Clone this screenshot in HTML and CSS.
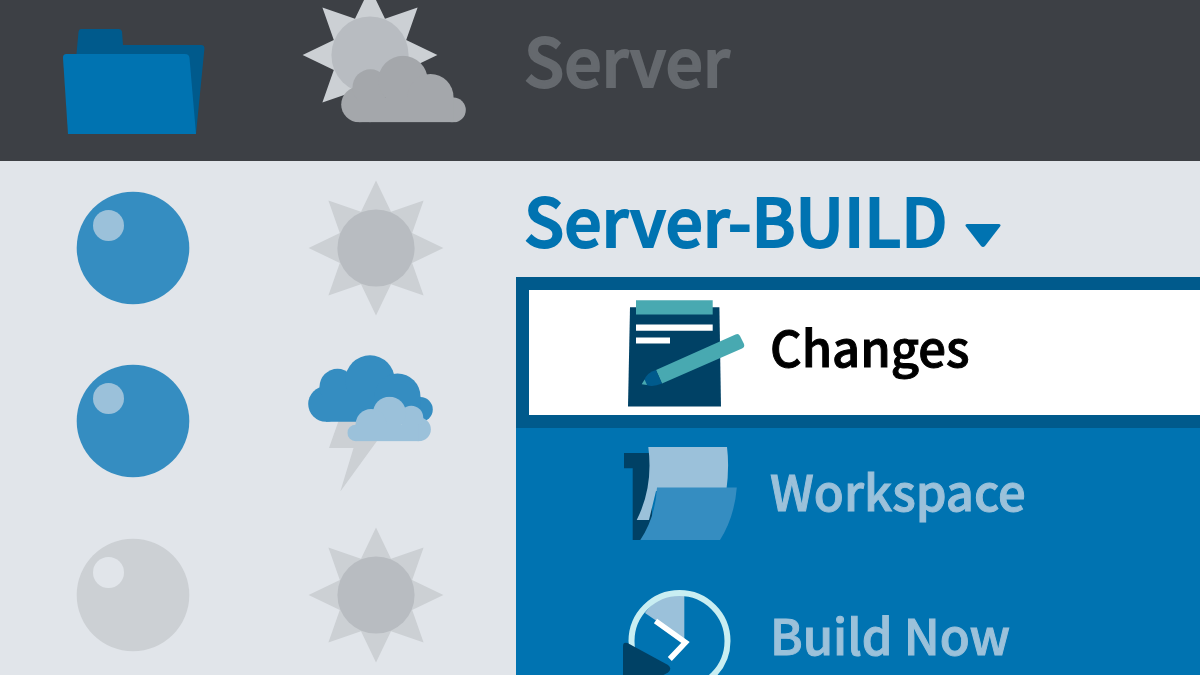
FILE: index.html
```
<!DOCTYPE html>
<html lang="en">
<head>
  <meta charset="UTF-8">
  <meta name="viewport" content="width=device-width, initial-scale=1.0">
  <title>Server-BUILD</title>
  <link rel="stylesheet" href="styles.css">
</head>
<body>
  <!-- shared shapes -->
  <svg class="shapes" width="0" height="0" aria-hidden="true">
    <symbol id="ball" viewBox="0 0 114 114">
      <circle cx="57" cy="57" r="56.3" fill="currentColor"/>
      <circle class="shine" cx="32.5" cy="34.5" r="15.5"/>
    </symbol>
    <symbol id="sun" viewBox="0 0 136 136">
      <path class="rays" d="M68 .6 83 31.8 115.6 20.4 104.2 53 135.4 68 104.2 83 115.6 115.6 83 104.2 68 135.4 53 104.2 20.4 115.6 31.8 83 .6 68 31.8 53 20.4 20.4 53 31.8Z"/>
      <circle class="core" cx="68" cy="68" r="38.6"/>
    </symbol>
    <symbol id="cloud" viewBox="0 0 125 67">
      <g fill="currentColor">
        <circle cx="18" cy="49" r="17.8"/>
        <circle cx="29.5" cy="31.8" r="18"/>
        <circle cx="62" cy="25" r="24.7"/>
        <circle cx="89.5" cy="41.5" r="23"/>
        <circle cx="112.4" cy="54.4" r="12.4"/>
        <path d="M18 42H112.4V66.8H18Z"/>
      </g>
    </symbol>
  </svg>

  <table class="jobs">
    <colgroup>
      <col class="col-status">
      <col class="col-weather">
      <col>
    </colgroup>
    <tbody>
      <tr class="folder-row">
        <td class="status">
          <svg width="144" height="106" viewBox="-1 0 144 106">
            <path fill="#005a8c" d="M19 0H57Q59.500 0 60 2.500L61 16H139Q142.800 16 142.400 20L134 105H50L14 30 16.500 3Q17 0 19 0Z"/>
            <path fill="#0073b1" d="M4.500 25H123Q127 25 127.500 29L134 105H6L1 29Q.8 25 4.500 25Z"/>
          </svg>
        </td>
        <td class="weather">
          <svg width="180" height="135" viewBox="0 0 180 135">
            <use href="#sun" x="16" y="-1" width="136" height="136"/>
            <use class="cloud-gray" href="#cloud" x="55" y="67.500" width="125" height="67"/>
          </svg>
        </td>
        <td class="name"><a href="#">Server</a></td>
      </tr>
      <tr>
        <td class="status"><svg class="ball blue" width="114" height="114"><use href="#ball"/></svg></td>
        <td class="weather"><svg width="136" height="136"><use href="#sun"/></svg></td>
        <td class="name">
          <div class="title">
            <a href="#">Server-BUILD</a>
            <button class="caret" type="button" aria-label="Open menu" aria-expanded="true">
              <svg width="36" height="24" viewBox="0 0 36 24">
                <path d="M2 0H34Q36.500 .4 35 2.500L20 22Q18 24 16 22L1 2.500Q-.5 .4 2 0Z" fill="currentColor"/>
              </svg>
            </button>
          </div>
          <nav class="menu">
            <a class="item selected" href="#">
              <svg width="130" height="120" viewBox="0 0 130 120">
                <path fill="#004165" d="M10 14.300H99.400L101 113.500H8Z"/>
                <path fill="#48a9b1" d="M16 7.300H92.700V21.500H16Z"/>
                <path fill="#fff" d="M16 31.500H92.700V37.800H16ZM16 44.500H50V50.500H16Z"/>
                <path fill="#48a9b1" d="M36 77 115.500 41.500Q118.500 40 120 43L124 51Q125 54 122 55.500L42 90.500Z"/>
                <path fill="#005a8c" d="M36 77 42 90.500Q33 94.500 26.500 92L24.300 87Q27 79.500 36 77Z"/>
                <path fill="#48a9b1" d="M21.700 91.300 24.600 86.500 27 92Z"/>
              </svg>
              <span>Changes</span>
            </a>
            <a class="item" href="#">
              <svg width="130" height="120" viewBox="0 0 130 120">
                <path fill="#004165" d="M4 16H32V80L24 103H12.700V31.300H4Z"/>
                <path fill="#9bc1da" d="M28.300 10H107Q109.500 30 106.300 54H36L29 83H16.700Q33.500 50 28.300 10Z"/>
                <path fill="#358dc1" d="M37 50.400H116.800Q114.500 80 100 103H20.300Q35.500 80 37 50.400Z"/>
              </svg>
              <span>Workspace</span>
            </a>
            <a class="item" href="#">
              <svg width="130" height="120" viewBox="0 0 130 120">
                <path fill="#9bc1da" d="M64.300 59V13Q40 10 25 32Z"/>
                <circle cx="59.500" cy="60" r="48" fill="none" stroke="#c9eef2" stroke-width="6"/>
                <path d="M35.500 40 65.500 61.500 49.800 78" fill="none" stroke="#fff" stroke-width="5.500"/>
                <path fill="#004165" d="M3 65Q3 60.500 7.500 62L48 84Q52.500 87.500 48 91.500L7.500 114Q3 116 3 111Z"/>
              </svg>
              <span>Build Now</span>
            </a>
          </nav>
        </td>
      </tr>
      <tr>
        <td class="status"><svg class="ball blue" width="114" height="114"><use href="#ball"/></svg></td>
        <td class="weather">
          <svg width="136" height="140" viewBox="0 0 136 140">
            <path class="rays" d="M34 60 21 97H45.500L32.300 140.500 69 90V60Z"/>
            <use class="cloud-blue" href="#cloud" x="0" y="4" width="125" height="67"/>
            <g transform="translate(123 45.500) scale(-.67 .67)">
              <use class="cloud-light" href="#cloud" width="125" height="67"/>
            </g>
          </svg>
        </td>
        <td></td>
      </tr>
      <tr>
        <td class="status"><svg class="ball gray" width="114" height="114"><use href="#ball"/></svg></td>
        <td class="weather"><svg width="136" height="136"><use href="#sun"/></svg></td>
        <td></td>
      </tr>
    </tbody>
  </table>
</body>
</html>
```
FILE: styles.css
```
body {
  margin: 0;
  height: 100vh;
  overflow: hidden;
  background-color: #e1e5ea;
  font-family: "Noto Sans CJK SC", "Noto Sans", sans-serif;
  font-weight: 500;
}

svg {
  display: block;
  flex-shrink: 0;
}

.shapes {
  position: absolute;
}

a {
  color: inherit;
  text-decoration: none;
  -webkit-text-stroke: 2px; /* semibold look */
}

.jobs {
  width: 100%;
  margin-top: -12px; /* list is scrolled a little */
  table-layout: fixed;
  border-collapse: collapse;
}

.col-status {
  width: 266px;
}

.col-weather {
  width: 220px;
}

.jobs tr {
  height: 173px;
}

.jobs tr:last-child {
  height: 175px;
}

.jobs td {
  padding: 0;
  vertical-align: middle;
}

.status svg,
.weather svg {
  margin: 0 auto;
}

/* top folder */
.jobs .folder-row {
  background-color: #3d4045;
  color: #65696e;
}

.folder-row .status {
  padding-top: 14px;
}

.jobs .folder-row .weather {
  vertical-align: top;
}

.jobs .name {
  position: relative;
  padding: 17px 0 0 38px;
  vertical-align: top;
  font-size: 66px;
  line-height: 80px;
}

.jobs .folder-row .name {
  padding-top: 30px;
}

.title {
  display: flex;
  align-items: flex-end;
  gap: 18px;
  color: #0073b1;
}

.caret {
  padding: 0 0 10px;
  border: none;
  background: none;
  color: inherit;
  cursor: pointer;
}

/* icon colours */
.blue {
  color: #358dc1;
  fill: #9bc1da;
}

.gray {
  color: #ccd0d4;
  fill: #e1e5ea;
}

.rays {
  fill: #ccd0d4;
}

.core {
  fill: #b8bcc1;
}

.cloud-gray {
  color: #a4a7ab;
}

.cloud-blue {
  color: #358dc1;
}

.cloud-light {
  color: #9bc1da;
}

/* drop-down */
.menu {
  position: absolute;
  top: 116px;
  left: 30px;
  right: 0;
  background-color: #0073b1;
  color: #9bc1da;
  font-size: 49px;
  line-height: 60px;
}

.item {
  display: flex;
  align-items: center;
  gap: 20px;
  height: 138px;
  margin-bottom: 6px;
  padding-left: 104px;
  -webkit-text-stroke-width: 1px;
}

.item span {
  padding-bottom: 14px;
}

.item.selected {
  height: 125px;
  margin-bottom: 0;
  padding-left: 91px;
  border: solid #005a8c;
  border-width: 13px 0 13px 13px;
  background-color: #fff;
  color: #000;
}
```
